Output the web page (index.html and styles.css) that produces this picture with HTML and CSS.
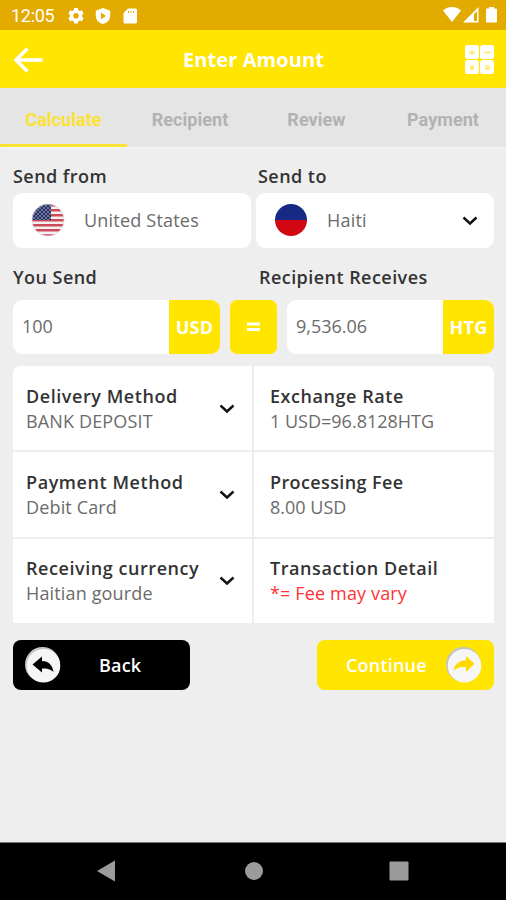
FILE: index.html
```html
<!DOCTYPE html>
<html lang="en">
<head>
<meta charset="utf-8">
<title>Enter Amount</title>
<link rel="stylesheet" href="styles.css">
</head>
<body>
<div class="status">
  <span class="clock">12:05</span>
  <svg class="status-left" width="70" height="16" viewBox="0 0 70 16" fill="#fff">
    <path fill-rule="evenodd" d="M6.2 0h3.6l.5 2.1 1.5.9 2.1-.7 1.8 3.1-1.6 1.5v1.8l1.6 1.5-1.8 3.1-2.1-.7-1.5.9-.5 2.1H6.200l-.5-2.100-1.500-.9-2.100.7L.3 10.200l1.600-1.500V6.900L.3 5.400l1.800-3.100 2.100.7 1.500-.9zM8 5a2.800 2.800 0 1 0 0 5.600A2.800 2.800 0 0 0 8 5z"/>
    <path fill-rule="evenodd" d="M35 0l7.200 2.700v5C42.200 12 39 15 35 16c-4-1-7.200-4-7.200-8.300v-5zM33 4.600v6.600l5-3.300z"/>
    <path fill-rule="evenodd" d="M60 .5h7.500q1.500 0 1.500 1.500v12q0 1.500-1.500 1.500H57q-1.500 0-1.500-1.500V5zM60 3v2h1V3zm2.500 0v2h1V3zM65 3v2h1V3z"/>
  </svg>
  <svg class="status-right" width="56" height="18" viewBox="0 0 56 18" fill="#fff">
    <path d="M0 4.500C5-.1 13-.1 18 4.500L9 16z"/>
    <path fill-rule="evenodd" d="M35.500 1v15.500H20zM31 8v7h3V5z"/>
    <path d="M46 2.500V1h5v1.500h2q1 0 1 1v12q0 1-1 1h-9q-1 0-1-1v-12q0-1 1-1z"/>
  </svg>
</div>
<header class="header">
  <svg class="arrow" width="30" height="28" viewBox="0 0 30 28" fill="none" stroke="#fff" stroke-width="3.600"><path d="M13.500 2.500L2 14l11.500 11.500M2 14h26.500"/></svg>
  <h1>Enter Amount</h1>
  <svg class="calc" width="30" height="30" viewBox="0 0 30 30">
    <g fill="#fff"><rect width="14" height="14" rx="2.500"/><rect x="15" width="14" height="14" rx="2.500"/><rect y="15" width="14" height="14" rx="2.500"/><rect x="15" y="15" width="14" height="14" rx="2.500"/></g>
    <path d="M4.500 7.500h5M7 5v5M19.500 7.500h6M5 20.500l4 4m0-4l-4 4M20 21.500h5M20 23.800h5" stroke="#ffe84a" stroke-width="1.500"/>
  </svg>
</header>
<nav class="tabs"><span class="active">Calculate</span><span>Recipient</span><span>Review</span><span>Payment</span></nav>
<main>
  <div class="labels"><label>Send from</label><label>Send to</label></div>
  <div class="countries">
    <div class="country">
      <svg class="flag" width="34" height="34" viewBox="0 0 34 34">
        <defs>
          <clipPath id="disc"><circle cx="17" cy="17" r="16"/></clipPath>
          <pattern id="stars" width="4" height="4" patternUnits="userSpaceOnUse"><circle cx="1" cy="1" r=".65" fill="#fff"/><circle cx="3" cy="3" r=".65" fill="#fff"/></pattern>
        </defs>
        <g clip-path="url(#disc)">
          <path fill="#f4f1f1" d="M0 0h34v34H0z"/>
          <path d="M0 2.200h34M0 7.200h34M0 12.200h34M0 17.200h34M0 22.200h34M0 27.200h34M0 32.500h34" stroke="#cb4c58" stroke-width="2.500"/>
          <path fill="#252f66" d="M0 0h20v17H0z"/><path fill="url(#stars)" d="M0 0h20v17H0z"/>
        </g>
        <circle cx="17" cy="17" r="16" fill="none" stroke="#d9d9e0" stroke-width=".7"/>
      </svg>
      <span>United States</span>
    </div>
    <div class="country">
      <svg class="flag" width="34" height="34" viewBox="0 0 34 34"><path fill="#152985" d="M1 17a16 16 0 0 1 32 0z"/><path fill="#d20714" d="M1 17a16 16 0 0 0 32 0z"/></svg>
      <span>Haiti</span>
      <svg class="chev" width="16" height="10" viewBox="0 0 16 10"><path d="M1.500 1.500L8 7.500l6.500-6"/></svg>
    </div>
  </div>
  <div class="labels second"><label>You Send</label><label>Recipient Receives</label></div>
  <div class="amounts">
    <div class="amount"><span class="value">100</span><b>USD</b></div>
    <div class="equals"><svg width="13" height="10" viewBox="0 0 13 10"><path d="M0 2h13M0 7.500h13" stroke="#fff" stroke-width="2.800"/></svg></div>
    <div class="amount"><span class="value">9,536.06</span><b>HTG</b></div>
  </div>
  <section class="details">
    <div class="cell"><div><h2>Delivery Method</h2><p>BANK DEPOSIT</p></div><svg class="chev" width="16" height="10" viewBox="0 0 16 10"><path d="M1.500 1.500L8 7.500l6.500-6"/></svg></div>
    <div class="cell"><div><h2>Exchange Rate</h2><p class="rate">1 USD=96.8128HTG</p></div></div>
    <div class="cell"><div><h2>Payment Method</h2><p>Debit Card</p></div><svg class="chev" width="16" height="10" viewBox="0 0 16 10"><path d="M1.500 1.500L8 7.500l6.500-6"/></svg></div>
    <div class="cell"><div><h2 class="fee">Processing Fee</h2><p class="rate">8.00 USD</p></div></div>
    <div class="cell"><div><h2>Receiving currency</h2><p>Haitian gourde</p></div><svg class="chev" width="16" height="10" viewBox="0 0 16 10"><path d="M1.500 1.500L8 7.500l6.500-6"/></svg></div>
    <div class="cell"><div><h2>Transaction Detail</h2><p class="warn">*= Fee may vary</p></div></div>
  </section>
  <div class="actions">
    <div class="btn back">
      <svg width="36" height="36" viewBox="0 0 36 36"><circle cx="17.500" cy="17.500" r="17.500" fill="#c4c4c4"/><circle cx="18.500" cy="18.700" r="16.800" fill="#f6f6f6"/><path fill="#000" d="M7.500 17.500l9.500-8v4.500c7 0 10.500 4.500 11.500 11-3-3-6.500-3.500-11.500-3.500v4z"/></svg>
      <span>Back</span>
    </div>
    <div class="btn next">
      <span>Continue</span>
      <svg width="36" height="36" viewBox="0 0 36 36"><circle cx="17.500" cy="17.500" r="17.500" fill="#c4c4c4"/><circle cx="18.500" cy="18.700" r="16.800" fill="#f6f6f6"/><path fill="#ffd900" d="M28.500 16.800L20 9v4.200c-7 0-11.500 4.300-12.500 10.800 3-3.500 6.500-4 12.500-4v5z"/></svg>
    </div>
  </div>
</main>
<footer class="navbar">
  <svg width="18" height="22" viewBox="0 0 18 22"><path d="M0 11L18 .5v21z"/></svg>
  <svg class="home" width="18" height="22" viewBox="0 0 18 22"><circle cx="9" cy="11" r="9"/></svg>
  <svg width="20" height="22" viewBox="0 0 20 22"><rect x=".5" y="1.500" width="19" height="19" rx="1"/></svg>
</footer>
</body>
</html>
```

FILE: styles.css
```css
* { box-sizing: border-box; }
body { margin: 0; width: 506px; height: 900px; display: flex; flex-direction: column; overflow: hidden; background: #eee; font-family: "Open Sans", sans-serif; color: #333; }
h1, h2, p { margin: 0; }
svg { display: block; flex: none; }
span, label, h1, h2, p, b { white-space: nowrap; }
.status { height: 30px; background: #e3aa00; display: flex; align-items: center; padding: 0 7px 0 11px; color: #fff; }
.clock { font: 400 18px/30px Roboto, sans-serif; width: 57px; padding-top: 2px; letter-spacing: -.3px; }
.status-left { margin-top: 1px; }
.status-right { margin-left: auto; }
.header { height: 58px; background: #ffe500; display: flex; align-items: center; justify-content: space-between; padding: 0 11px 0 14px; }
.header h1 { font-size: 20px; line-height: 28px; font-weight: 700; color: #fff; margin: 2px 2px 0 0; letter-spacing: .08px; }
.calc { margin-top: 2px; }
.arrow { margin-top: 2px; }
.tabs { height: 59px; background: #e5e5e5; display: grid; grid-template-columns: 127px 126px 127px 126px; box-shadow: 0 1px 2px #f7f7f7; }
.tabs span { text-align: center; font: 700 18px/63px Roboto, sans-serif; color: #b2b2b2; height: 59px; border-bottom: 3px solid transparent; letter-spacing: .05px; }
.tabs .active { color: #fbe233; border-color: #fbe233; }
main { flex: 1; padding: 16px 12px 0 13px; }
.labels { display: grid; grid-template-columns: 245px 1fr; font-size: 18px; line-height: 27px; font-weight: 600; height: 30px; letter-spacing: .45px; }
.second { margin-top: 16px; height: 36px; grid-template-columns: 246px 1fr; line-height: 26px; }
.countries { display: grid; grid-template-columns: 238px 238px; gap: 5px; height: 54.500px; }
.country { background: #fff; border-radius: 9px; display: flex; align-items: center; padding: 0 16px 0 18px; font-size: 18px; letter-spacing: .2px; color: #6b6b6b; }
.country span { margin-left: 19px; }
.country .chev { margin: 1px 0 0 auto; }
.chev { fill: none; stroke: #111; stroke-width: 2.400; }
.amounts { display: grid; grid-template-columns: 207px 47px 207px; gap: 10px; height: 54px; }
.amount { display: flex; background: #fff; border-radius: 9px; overflow: hidden; }
.value { flex: 1; padding-left: 9px; font-size: 18px; line-height: 53px; color: #6b6b6b; }
.amount b { width: 51px; background: #ffe500; color: #fff; text-align: center; font-size: 18px; line-height: 55px; letter-spacing: .2px; }
.equals { border-radius: 7px; background: #ffe500; display: flex; align-items: center; justify-content: center; }
.details { margin-top: 12.500px; display: grid; grid-template-columns: 239px 240px; grid-auto-rows: 84.400px; gap: 2px; border-radius: 7px 7px 2px 2px; overflow: hidden; }
.cell { background: #fff; padding: 1px 17px 0 13px; display: flex; align-items: center; justify-content: space-between; }
.cell:nth-child(even) { padding-left: 16px; }
.cell h2 { font-size: 18px; font-weight: 600; line-height: 25px; letter-spacing: .56px; }
.cell .fee { letter-spacing: .38px; }
.cell p { font-size: 18px; line-height: 25px; color: #6b6b6b; letter-spacing: .15px; }
.cell .rate { letter-spacing: 0; }
.cell .warn { color: #f33; }
.actions { display: flex; justify-content: space-between; margin-top: 17px; }
.btn { width: 177px; height: 50px; border-radius: 8px; display: flex; align-items: center; color: #fff; font-size: 18px; font-weight: 600; line-height: 24px; letter-spacing: .2px; }
.btn span { margin-bottom: 1px; }
.btn.back { background: #000; padding-left: 12px; }
.back span { margin-left: 38px; }
.next { background: #ffe500; justify-content: space-between; padding: 0 12px 0 29px; }
.navbar { height: 58px; background: #000; border-top: 1px solid #777; display: flex; align-items: center; justify-content: space-between; padding: 0 97px 2px; fill: #9b9b9b; }
.home { margin-left: 3px; }
```
